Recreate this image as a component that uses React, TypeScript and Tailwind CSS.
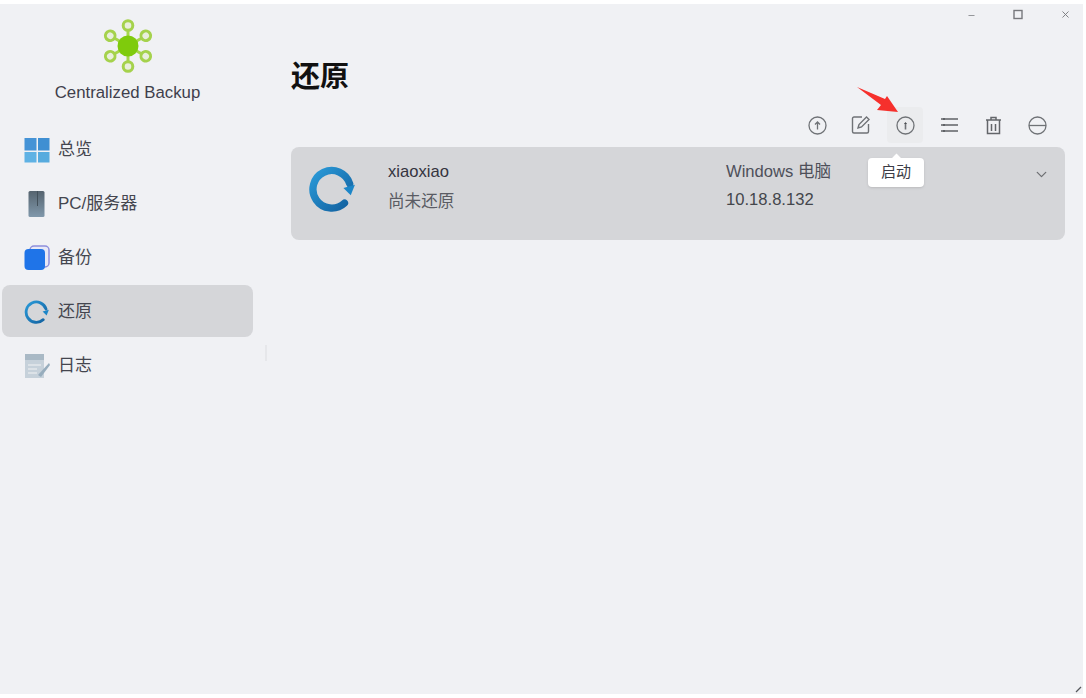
import { ChevronDown, Minus, X } from 'lucide-react';

const cjk = '[font-family:"Liberation_Sans","Noto_Sans_CJK_SC",sans-serif]';

const Logo = () => (
  <svg width="50" height="54" viewBox="0 0 50 54" fill="none">
    {[0, 60, 120, 180, 240, 300].map(a => (
      <g key={a} transform={`rotate(${a} 25 27)`}>
        <line x1="25" y1="27" x2="25" y2="9" stroke="#a6d64a" strokeWidth="3" />
        <circle cx="25" cy="6.5" r="4.8" fill="#e9efdc" stroke="#a5d24c" strokeWidth="3" />
      </g>
    ))}
    <circle cx="25" cy="27" r="10.5" fill="#7fcb0c" />
  </svg>
);

const OverviewIcon = () => (
  <svg width="26" height="26" viewBox="0 0 26 26">
    <rect x="0.5" y="1" width="12" height="12.5" fill="#4593d6" />
    <rect x="14" y="1" width="11.5" height="12.5" fill="#3f8fd2" />
    <rect x="0.5" y="15" width="12" height="10.5" fill="#5fb2e4" />
    <rect x="14" y="15" width="11.5" height="10.5" fill="#57abde" />
  </svg>
);

const ServerIcon = () => (
  <svg width="26" height="28" viewBox="0 0 26 28">
    <defs>
      <linearGradient id="srv" x1="0" y1="0" x2="0" y2="1">
        <stop offset="0" stopColor="#56646f" />
        <stop offset="1" stopColor="#8098ab" />
      </linearGradient>
    </defs>
    <rect x="4.5" y="1" width="16" height="26" rx="1.5" fill="url(#srv)" />
    <rect x="13" y="1" width="1" height="15" fill="#43505a" />
  </svg>
);

const BackupIcon = () => (
  <svg width="26" height="26" viewBox="0 0 26 26">
    <rect x="6" y="1" width="19" height="21" rx="4" fill="#e8e9f6" stroke="#8d8fdc" strokeWidth="1.5" />
    <rect x="0.5" y="4" width="20.5" height="21" rx="4" fill="#1f74e8" />
  </svg>
);

const RestoreIcon = ({ size, stroke }: { size: number; stroke: number }) => (
  <svg width={size} height={size} viewBox="0 0 46 46" fill="none">
    <defs>
      <linearGradient id={`rst${size}`} x1="0" y1="0" x2="1" y2="1">
        <stop offset="0" stopColor="#2a9ad8" />
        <stop offset="1" stopColor="#12609f" />
      </linearGradient>
    </defs>
    <path d="M39 18A18 18 0 1 0 34 36.5" stroke={`url(#rst${size})`} strokeWidth={stroke} strokeLinecap="round" />
    <path d="M33 22L44 19L40 29Z" fill="#1c86c8" />
  </svg>
);

const LogIcon = () => (
  <svg width="26" height="26" viewBox="0 0 26 26">
    <rect x="1" y="1" width="19" height="24" fill="#c6d1da" />
    <rect x="1" y="1" width="19" height="6" fill="#a9b9c5" />
    <path d="M4 12h13M4 16h9M4 20h9" stroke="#e3e8ec" strokeWidth="1.5" />
    <path d="M14 22L25 10l1 2-9 12z" fill="#97adbd" />
  </svg>
);

const ToolBtn = ({ children, hover }: { children: React.ReactNode; hover?: boolean }) => (
  <div className={`w-[36px] h-[36px] flex items-center justify-center rounded ${hover ? 'bg-[#ebecee]' : ''}`}>
    {children}
  </div>
);

const Circle = ({ children }: { children?: React.ReactNode }) => (
  <svg width="19" height="19" viewBox="0 0 19 19" fill="none" stroke="#6f7276" strokeWidth="1.3">
    <circle cx="9.5" cy="9.5" r="8.5" />
    {children}
  </svg>
);

const navItems = [
  { label: '总览', icon: <OverviewIcon /> },
  { label: 'PC/服务器', icon: <ServerIcon /> },
  { label: '备份', icon: <BackupIcon /> },
  { label: '还原', icon: <RestoreIcon size={26} stroke={5} />, active: true },
  { label: '日志', icon: <LogIcon /> },
];

export default function App() {
  return (
    <div className={`w-[1086px] h-[698px] bg-white pt-[4px] pb-[4px] pr-[3px] overflow-hidden ${cjk}`}>
      <div className="relative h-full bg-[#f0f1f4] flex">
        <aside className="w-[266px] shrink-0 pl-[2px]">
          <div className="w-[251px] flex flex-col items-center pt-[15px]">
            <Logo />
            <div className="mt-[10px] text-[16.8px] leading-[20px] text-[#3f3f4c]">Centralized Backup</div>
          </div>
          <nav className="mt-[20px] flex flex-col gap-[2px]">
            {navItems.map(item => (
              <div
                key={item.label}
                className={`w-[251px] h-[52px] pl-[22px] pt-[2px] flex items-center gap-[8px] rounded-lg text-[17px] text-[#44464f] ${item.active ? 'bg-[#d5d6d9]' : ''}`}
              >
                <div className="w-[26px] flex justify-center">{item.icon}</div>
                <span>{item.label}</span>
              </div>
            ))}
          </nav>
        </aside>

        <main className="flex-1 flex flex-col pl-[25px] pr-[18px]">
          <div className="flex justify-end gap-[36px] h-[24px] pt-[5px] -mr-[6px] text-[#77787c]">
            <Minus size={9} className="mt-[2px]" />
            <svg width="11" height="11" viewBox="0 0 11 11" fill="none" stroke="#77787c" strokeWidth="1.4" className="ml-[1px]"><rect x="1" y="1.5" width="8" height="8" /></svg>
            <X size={11} />
          </div>
          <h1 className="mt-[29px] text-[29px] leading-[40px] font-bold text-[#111]">还原</h1>
          <div className="mt-[10px] flex justify-end gap-[8px] pr-[10px]">
            <ToolBtn>
              <Circle><path d="M9.5 13.5V6M7 8.5l2.5-2.5L12 8.5" /></Circle>
            </ToolBtn>
            <ToolBtn>
              <svg width="20" height="20" viewBox="0 0 20 20" fill="none" stroke="#6f7276" strokeWidth="1.4">
                <path d="M11 2H3a1.5 1.5 0 0 0-1.5 1.5v13A1.5 1.5 0 0 0 3 18h13a1.5 1.5 0 0 0 1.5-1.5V9" />
                <path d="M7 13l1-3.5L15.5 2 18 4.5 10.5 12z" />
              </svg>
            </ToolBtn>
            <ToolBtn hover>
              <Circle><path d="M9.5 13.5V7" strokeWidth="1.6" /><path d="M8 8l1.5-2L11 8z" fill="#4c4f53" stroke="none" /></Circle>
            </ToolBtn>
            <ToolBtn>
              <svg width="19" height="16" viewBox="0 0 19 16" fill="none" stroke="#5f6266" strokeWidth="1.5">
                <path d="M1 2h17M1 8h17M1 14h17" />
                <path d="M4 1v2M4 7v2M4 13v2" strokeWidth="2" />
              </svg>
            </ToolBtn>
            <ToolBtn>
              <svg width="17" height="19" viewBox="0 0 17 19" fill="none" stroke="#63666a" strokeWidth="1.5">
                <path d="M1 4h15M6 4V1.5h5V4M2.5 4v13.5h12V4M6.5 8v7M10.5 8v7" />
              </svg>
            </ToolBtn>
            <ToolBtn>
              <Circle><path d="M1 9.5h17" /></Circle>
            </ToolBtn>
          </div>
          <div className="mt-[4px] relative h-[93px] rounded-lg bg-[#d5d6d9] flex items-start">
            <div className="ml-[18px] mt-[18px] w-[79px]">
              <RestoreIcon size={48} stroke={7} />
            </div>
            <div className="w-[338px] pt-[14px] text-[16.6px] leading-[21px]">
              <div className="text-[#34343f]">xiaoxiao</div>
              <div className="mt-[9px] text-[#5a5c64]">尚未还原</div>
            </div>
            <div className="pt-[14px] text-[16.6px] leading-[21px]">
              <div className="text-[#4e505a]">Windows 电脑</div>
              <div className="mt-[7px] text-[#44464c]">10.18.8.132</div>
            </div>
            <ChevronDown size={17} strokeWidth={1.8} className="absolute right-[15px] top-[19px] text-[#6d6f73]" />
          </div>

          {/* hint bubble and the red marker sit over the toolbar */}
          <div className="absolute left-[868px] top-[154px] w-[56px] h-[29px] bg-white rounded-[4px] flex items-center justify-center text-[15px] text-[#3c3c46] shadow-sm">
            启动
            <span className="absolute -top-[3px] left-[25px] w-[7px] h-[7px] bg-white rotate-45" />
          </div>
          <svg className="absolute left-[855px] top-[82px]" width="46" height="32" viewBox="0 0 46 32">
            <path d="M2 1L30 13L32 10L43 26L22 24L26 19Z" fill="#f6302c" />
          </svg>
        </main>

        {/* sash between the side list and the page, resize grip in the corner */}
        <div className="absolute left-[265px] top-[341px] w-[2px] h-[16px] bg-[#e6e7ea]" />
        <svg className="absolute right-[1px] bottom-[1px]" width="7" height="7" viewBox="0 0 7 7">
          <path d="M1 6L6 1" stroke="#55585c" strokeWidth="1.2" />
        </svg>
      </div>
    </div>
  );
}
